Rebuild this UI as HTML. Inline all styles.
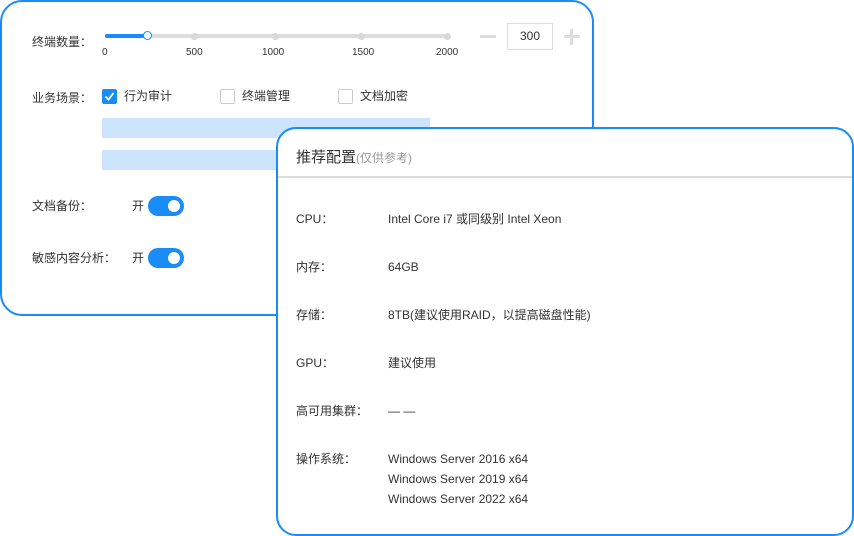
<!DOCTYPE html><html><head><meta charset="utf-8"><style>
body{margin:0;width:854px;height:536px;background:#fff;position:relative;overflow:hidden;font-family:"Liberation Sans","Noto Sans CJK SC",sans-serif;color:#333;font-size:12px}
.a{position:absolute}
.p1{left:0;top:0;width:590px;height:312px;border:2px solid #1a8cf5;border-radius:22px;background:#fff}
.p2{left:276px;top:127px;width:574px;height:405px;border:2px solid #1a8cf5;border-radius:20px;background:#fff}
.t{position:absolute;white-space:nowrap;line-height:14px}
.dot{position:absolute;width:7px;height:7px;border-radius:50%;background:#d8d8d8;top:33px}
.cb{position:absolute;width:13px;height:13px;border:1px solid #ccc;border-radius:2px;top:89px;background:#fff}
.tg{position:absolute;left:148px;width:36px;height:20px;border-radius:10px;background:#1a8cf5}
.tg:after{content:"";position:absolute;right:4px;top:4px;width:12px;height:12px;border-radius:50%;background:#fff}
</style></head><body>
<div class="a p1"></div>
<div class="t" style="left:32px;top:35px">终端数量：</div>
<div class="a" style="left:105px;top:34px;width:343px;height:4px;background:#ddd;border-radius:2px"></div>
<div class="a" style="left:105px;top:34px;width:43px;height:4px;background:#1a8cf5;border-radius:2px"></div>
<div class="dot" style="left:191px"></div><div class="dot" style="left:272px"></div><div class="dot" style="left:358px"></div><div class="dot" style="left:444px"></div>
<div class="a" style="left:143px;top:31px;width:7px;height:7px;border:1.5px solid #1a8cf5;border-radius:50%;background:#fff"></div>
<div class="t" style="left:102px;top:46px;font-size:10px">0</div>
<div class="t" style="left:186px;top:46px;font-size:10px">500</div>
<div class="t" style="left:262px;top:46px;font-size:10px">1000</div>
<div class="t" style="left:352px;top:46px;font-size:10px">1500</div>
<div class="t" style="left:436px;top:46px;font-size:10px">2000</div>
<div class="a" style="left:480px;top:35px;width:16px;height:3px;background:#ddd"></div>
<div class="a" style="left:507px;top:23px;width:44px;height:25px;border:1.5px solid #ddd;text-align:center;line-height:25px">300</div>
<div class="a" style="left:564px;top:35px;width:16px;height:3px;background:#ddd"></div>
<div class="a" style="left:570px;top:29px;width:3px;height:16px;background:#ddd"></div>
<div class="t" style="left:32px;top:91px">业务场景：</div>
<div class="cb" style="left:102px;background:#1a8cf5;border-color:#1a8cf5"><svg width="13" height="13" viewBox="0 0 13 13"><path d="M2.5 6.5l3 3 5-6.5" stroke="#fff" stroke-width="1.8" fill="none"/></svg></div>
<div class="t" style="left:124px;top:89px;font-size:12px">行为审计</div>
<div class="cb" style="left:220px"></div><div class="t" style="left:242px;top:89px">终端管理</div>
<div class="cb" style="left:338px"></div><div class="t" style="left:360px;top:89px">文档加密</div>
<div class="a" style="left:102px;top:118px;width:328px;height:20px;background:#cce5fc"></div>
<div class="a" style="left:102px;top:150px;width:328px;height:20px;background:#cce5fc"></div>
<div class="t" style="left:32px;top:199px">文档备份：</div><div class="t" style="left:132px;top:199px">开</div><div class="tg" style="top:196px"></div>
<div class="t" style="left:32px;top:251px">敏感内容分析：</div><div class="t" style="left:132px;top:251px">开</div><div class="tg" style="top:248px"></div>
<div class="a p2"></div>
<div class="t" style="left:296px;top:149px;font-size:15px;line-height:18px">推荐配置<span style="font-size:12px;color:#999">(仅供参考)</span></div>
<div class="a" style="left:278px;top:176px;width:574px;height:2px;background:#ddd"></div>
<div class="t" style="left:296px;top:212px">CPU：</div><div class="t" style="left:388px;top:212px">Intel Core i7 或同级别 Intel Xeon</div>
<div class="t" style="left:296px;top:260px">内存：</div><div class="t" style="left:388px;top:260px">64GB</div>
<div class="t" style="left:296px;top:308px">存储：</div><div class="t" style="left:388px;top:308px">8TB(建议使用RAID，以提高磁盘性能)</div>
<div class="t" style="left:296px;top:356px">GPU：</div><div class="t" style="left:388px;top:356px">建议使用</div>
<div class="t" style="left:296px;top:404px">高可用集群：</div><div class="t" style="left:388px;top:404px">— —</div>
<div class="t" style="left:296px;top:452px">操作系统：</div>
<div class="t" style="left:388px;top:452px;line-height:20px;top:449px">Windows Server 2016 x64<br>Windows Server 2019 x64<br>Windows Server 2022 x64</div>
</body></html>
